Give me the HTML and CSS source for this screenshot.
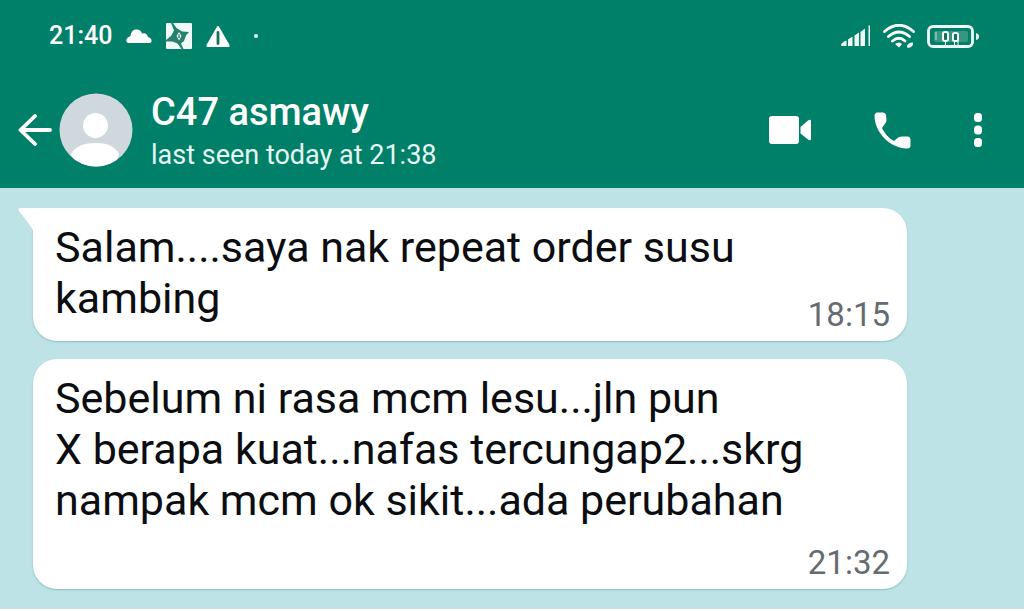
FILE: index.html
```html
<!DOCTYPE html>
<html lang="ms">
<head>
<meta charset="utf-8">
<meta name="viewport" content="width=device-width, initial-scale=1">
<title>C47 asmawy</title>
<link rel="stylesheet" href="styles.css">
</head>
<body>
<header class="top">
  <div class="status">
    <div class="status-left">
      <time class="clock">21:40</time>
      <svg class="cloud" width="26" height="14" viewBox="0 0 26 14" aria-hidden="true"><path fill="#fff" d="M2.500 14C0 14 0 10.500 1 9.500C2 8 3.500 7.500 4.500 7C5 3 7 0.500 10 0.500C13 0 15 1.500 16 4.500C19 3.500 21.500 5 22 8C24.500 8.500 26 10.500 25.500 12.500Q25 14 23.500 14Z"/></svg>
      <svg class="app" width="26" height="26" viewBox="0 0 26 26" aria-hidden="true"><rect width="26" height="26" rx="1" fill="#effaf7"/><path fill="#26806c" d="M5 0H7L10.500 5L16 8.500L23 9L20 12.500L18 18L15 20.500L17.500 26H15.500L11.500 20.500L6.500 18.500L0 18.500V17L5 13L8 7.500Z"/><path fill="#effaf7" d="M13 9l2.500 4l-2.500 4.500l-2.500-4.500z"/><path stroke="#3b7c6c" stroke-width="1.500" d="M13 11.500v3.500"/></svg>
      <svg width="24" height="21" viewBox="0 0 24 21" aria-hidden="true"><path fill="#fff" d="M10.800 1Q12 -1 13.200 1L23.500 19Q24 21 22.500 21H1.500Q0 21 .500 19Z"/><path stroke="#176f5c" stroke-width="2.800" stroke-linecap="round" d="M12 6.500V17.500"/></svg>
      <span class="more-dot"></span>
    </div>
    <div class="status-right">
      <svg width="30" height="22" viewBox="0 0 30 22" aria-hidden="true"><path fill="#effaf7" d="M0 20Q1 17 5.500 15.500V21H1Q0 21 0 20M7 14.500L11.500 11.500V21H7M13.500 10.500L18 7.500V21H13.500M19.500 7L24 3.500V21H19.500M27.500 0.500H29V21H27.500"/></svg>
      <svg width="32" height="24" viewBox="0 0 32 24" aria-hidden="true"><g fill="none" stroke="#fff" stroke-width="2.800" stroke-linecap="round"><path d="M1.500 7.500Q16-5 30.500 7.500M5.500 12.500Q16 3.500 26.500 12.500M9.500 17Q16 11.500 22 17"/></g><path fill="#fff" d="M12 20Q16 17 19 20L16 23.500ZM24 22Q25 18.500 30 18.500Q30.500 23 25 24Q24 24 24 22"/></svg>
      <svg width="52" height="23" viewBox="0 0 52 23" aria-hidden="true"><rect x="1.500" y="1.500" width="44" height="20" rx="4.500" fill="none" stroke="#effaf7" stroke-width="2.800"/><rect x="7" y="6" width="34" height="11" rx="2" fill="#379580"/><path d="M9 7v8" stroke="#80b9ad" stroke-width="2"/><g fill="#176f5c" stroke="#effaf7" stroke-width="2"><rect x="16" y="7" width="5" height="9" rx="2"/><rect x="26" y="8" width="5" height="8" rx="1.500"/></g><path d="M18.500 16v4M27.500 16v4M31 16v4" stroke="#effaf7"/><path fill="#effaf7" d="M49 8q3 .500 3 3.500t-3 3.500z"/></svg>
    </div>
  </div>
  <div class="bar">
    <button class="icon-btn" type="button" aria-label="Back"><svg width="34" height="34" viewBox="0 0 34 34"><path fill="none" stroke="#fff" stroke-width="3.800" stroke-linecap="round" stroke-linejoin="round" d="M17 3L2.500 17L17 31M3 17H32"/></svg></button>
    <svg class="avatar" width="74" height="74" viewBox="0 0 74 74" role="img" aria-label="Profile photo"><defs><clipPath id="round"><circle cx="37" cy="37" r="36.500"/></clipPath></defs><g clip-path="url(#round)"><rect width="74" height="74" fill="#cfd8dc"/><circle cx="36.500" cy="32.500" r="12.500" fill="#fff"/><path fill="#fff" d="M12 61C16 53 26 50 37 50S56 53 60 61L56 74H18Z"/></g></svg>
    <div class="contact">
      <h1 class="name">C47 asmawy</h1>
      <p class="seen">last seen today at 21:38</p>
    </div>
    <div class="actions">
      <button class="icon-btn" type="button" aria-label="Video call"><svg width="44" height="28" viewBox="0 0 44 28"><rect x="1" width="30" height="28" rx="3" fill="#fff"/><path fill="#fff" d="M32.500 11L40 4.500Q43 3 43 5V23Q43 25 40 23.500L32.500 17.500Z"/></svg></button>
      <button class="icon-btn" type="button" aria-label="Voice call"><svg width="37" height="37" viewBox="0 0 37 37"><path fill="#fff" d="M3 .500H9Q11.500 .500 12 3L12.500 8Q12.500 10 11.500 11L8 16C11 22 15.500 27 20 29L23.500 26Q25 24.500 28 24.500H34Q36.500 25 36.500 27.500V33.500Q36.500 36.500 33 36.500C16 36 1 21 .500 4Q.500 1 3 .500Z"/></svg></button>
      <button class="icon-btn" type="button" aria-label="More options"><svg width="10" height="36" viewBox="0 0 10 36"><g fill="#fff"><rect x="1" y="1" width="8" height="9" rx="3.500"/><rect x="1" y="13.500" width="8" height="9" rx="3.500"/><rect x="1" y="26" width="8" height="9" rx="3.500"/></g></svg></button>
    </div>
  </div>
</header>
<main class="chat">
  <article class="bubble first">
    <svg class="tail" width="16" height="24" viewBox="0 0 16 24" aria-hidden="true"><path fill="#fff" d="M2 0H16V24Q14 20 11 16L1 3Q-1 0 2 0Z"/></svg>
    <p class="text">Salam....saya nak repeat order susu kambing</p>
    <time class="time">18:15</time>
  </article>
  <article class="bubble tall">
    <p class="text">Sebelum ni rasa mcm lesu...jln pun<br>X berapa kuat...nafas tercungap2...skrg<br>nampak mcm ok sikit...ada perubahan</p>
    <time class="time">21:32</time>
  </article>
</main>
</body>
</html>
```
FILE: styles.css
```css
* { box-sizing: border-box; }
body { margin: 0; min-height: 100vh; display: flex; flex-direction: column; background: #fff; font-family: Roboto, "Liberation Sans", sans-serif; }
h1, p { margin: 0; }

.top { background: #008069; color: #fff; padding-bottom: 10px; }
.status { display: flex; justify-content: space-between; align-items: center; height: 72px; padding: 0 45px 0 49px; }
.status-left { display: flex; align-items: center; gap: 14px; }
.status-right { display: flex; align-items: center; gap: 12px; }
.status svg { display: block; }
.clock { font-size: 25px; line-height: 28px; font-weight: 500; }
.more-dot { width: 4px; height: 4px; margin-left: 10px; border-radius: 2px; background: #effaf7; }

.bar { display: flex; align-items: center; height: 106px; padding: 10px 41px 0 18px; }
.icon-btn { display: flex; padding: 0; border: 0; background: none; cursor: pointer; }
.avatar { flex: none; margin-left: 7px; }
.contact { flex: 1; min-width: 0; padding: 2px 0 0 18px; }
.name { font-size: 38px; line-height: 46px; font-weight: 500; }
.seen { padding-top: 2px; font-size: 27px; line-height: 36px; color: #e6f6f2; }
.actions { display: flex; align-items: center; gap: 62px; }

.chat { flex: 1; display: flex; flex-direction: column; gap: 18px; margin-bottom: 2px; padding: 20px 117px 19px 33px; background: #bee3e7; }
.bubble { position: relative; display: flex; justify-content: space-between; padding: 14px 17px 8px 22px; border-radius: 24px; background: #fff; box-shadow: 0 1px 2px #88bcc1; }
.first { border-top-left-radius: 0; }
.tall { flex-direction: column; gap: 19px; }
.tail { position: absolute; top: 0; left: -15px; }
.text { font-size: 43px; line-height: 51px; color: #0b0d10; }
.time { align-self: flex-end; font-size: 33px; line-height: 36px; color: #666b70; }
.first .text { padding-bottom: 9px; }
```
